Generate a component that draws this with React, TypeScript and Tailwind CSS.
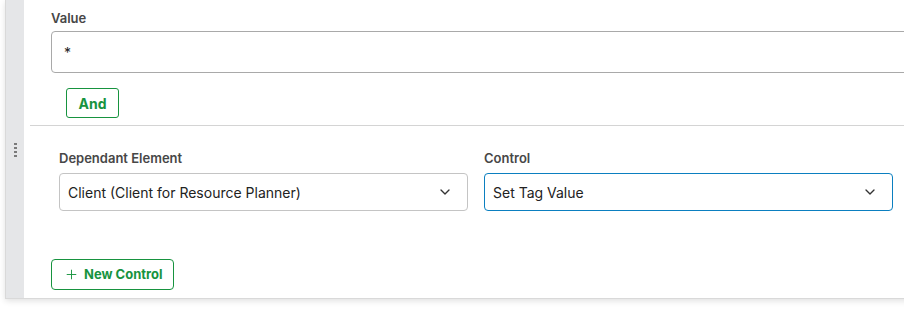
import { ChevronDown, Plus } from 'lucide-react';

function Label({ children }: { children: React.ReactNode }) {
  return <div className="text-[13px] leading-4 font-semibold text-[#474747]">{children}</div>;
}

function Select({ value, active }: { value: string; active?: boolean }) {
  return (
    <div
      className={`flex h-[38px] items-center justify-between rounded-[4px] border bg-white pl-[8px] pr-[14px] text-[14px] text-[#222] ${
        active ? 'border-[#0b7fc0]' : 'border-[#c4c4c4]'
      }`}
    >
      <span>{value}</span>
      <ChevronDown className="h-4 w-4 text-[#333]" strokeWidth={2} />
    </div>
  );
}

export default function App() {
  return (
    <div className="h-[334px] w-[904px] overflow-hidden bg-white" style={{ fontFamily: 'Inter, "Liberation Sans", sans-serif' }}>
      <div className="ml-[5px] flex h-[299px] w-[930px] border-b border-l border-[#d9d9d9] shadow-[0_2px_6px_rgba(0,0,0,0.12)]">
        {/* drag handle strip */}
        <div className="relative w-[18px] shrink-0 bg-[#e5e6e8]">
          <div className="absolute left-[8px] top-[143px] flex flex-col gap-[2px]">
            {[0, 1, 2, 3].map((i) => (
              <div key={i} className="h-[2px] w-[3px] bg-[#7a7a7a]" />
            ))}
          </div>
        </div>

        <div className="flex-1">
          {/* value */}
          <div className="pl-[27px] pt-[10px]">
            <Label>Value</Label>
            <div className="mt-[5px] flex h-[42px] items-center rounded-[4px] border border-[#a9a9a9] pl-[12px] text-[14px] text-[#222]">
              *
            </div>
            <button className="mt-[15px] ml-[15px] h-[30px] w-[53px] rounded-[3px] border border-[#17933f] text-[14px] font-bold text-[#17933f]">
              And
            </button>
          </div>

          <div className="ml-[6px] mt-[7px] border-t border-[#d4d4d4]" />

          {/* dependant control */}
          <div className="flex gap-[16px] pl-[35px] pt-[24px]">
            <div className="w-[409px]">
              <Label>Dependant Element</Label>
              <div className="mt-[7px]">
                <Select value="Client (Client for Resource Planner)" />
              </div>
            </div>
            <div className="w-[409px]">
              <Label>Control</Label>
              <div className="mt-[7px]">
                <Select value="Set Tag Value" active />
              </div>
            </div>
          </div>

          <button className="ml-[27px] mt-[48px] flex h-[31px] w-[123px] items-center gap-[5px] rounded-[4px] border border-[#17933f] pl-[12px] text-[13px] font-bold text-[#17933f]">
            <Plus className="h-[15px] w-[15px]" strokeWidth={1.5} />
            New Control
          </button>
        </div>
      </div>
    </div>
  );
}
